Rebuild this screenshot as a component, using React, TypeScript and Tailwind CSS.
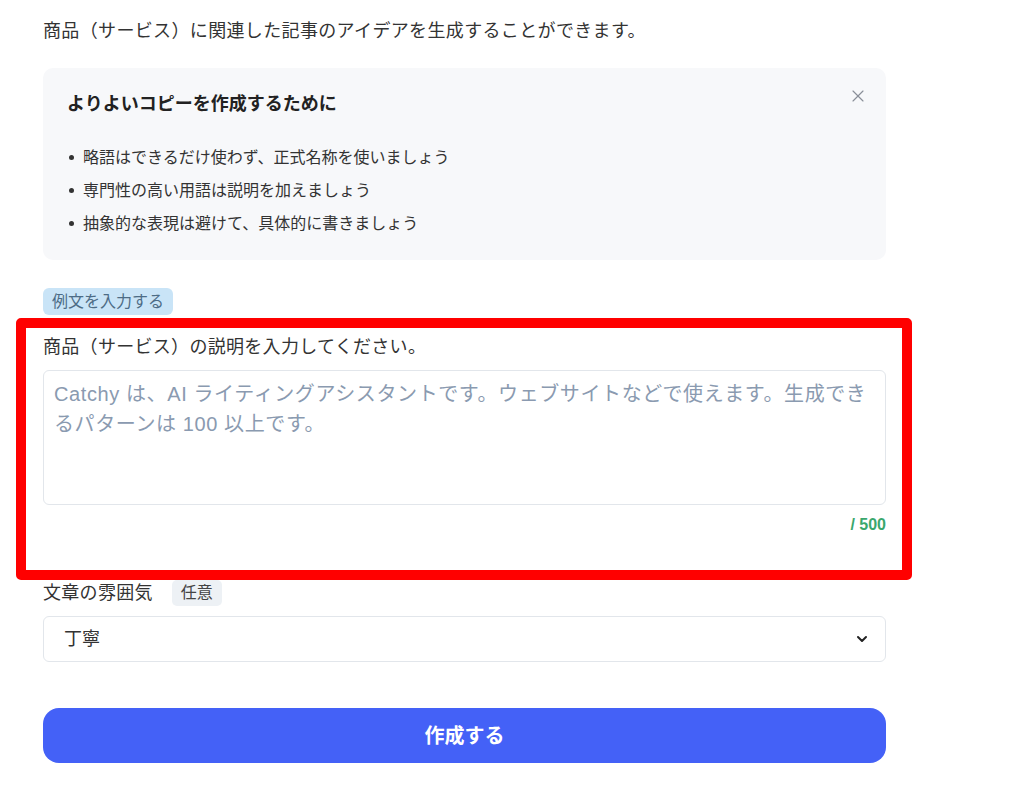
import React, { useState } from 'react';
import { ChevronDown, X } from 'lucide-react';

const TIPS = [
  '略語はできるだけ使わず、正式名称を使いましょう',
  '専門性の高い用語は説明を加えましょう',
  '抽象的な表現は避けて、具体的に書きましょう',
];

const FONT = "font-['Liberation_Sans','Noto_Sans_CJK_JP',sans-serif]";

const App: React.FC = () => {
  const [text, setText] = useState('');
  const [showTips, setShowTips] = useState(true);

  return (
    <div className={`min-h-[810px] w-full bg-white text-[#333333] ${FONT}`}>
      <div className="ml-[43px] w-[843px] pt-[18px]">
        <p className="text-[18px] leading-[26px] tracking-[0.35px]">
          商品（サービス）に関連した記事のアイデアを生成することができます。
        </p>

        {showTips && (
          <div className="relative mt-[24px] h-[192px] rounded-[10px] bg-[#f7f8fa] px-[24px] pt-[23px]">
            <h3 className="text-[18px] font-bold leading-[26px] text-[#222]">
              よりよいコピーを作成するために
            </h3>
            <button
              onClick={() => setShowTips(false)}
              className="absolute right-[18px] top-[18px] text-[#8a8f98]"
            >
              <X className="h-[20px] w-[20px]" strokeWidth={1.4} />
            </button>
            <ul className="mt-[24px]">
              {TIPS.map((t) => (
                <li key={t} className="flex h-[33px] items-center text-[16px]">
                  <span className="ml-[2px] mr-[9px] h-[5px] w-[5px] rounded-full bg-[#333]" />
                  {t}
                </li>
              ))}
            </ul>
          </div>
        )}

        <button className="mt-[28px] flex h-[27px] items-center rounded-[6px] bg-[#c9e4f7] px-[9px] text-[16px] text-[#4d6c86]">
          例文を入力する
        </button>

        <div className="relative mt-[19px]">
          <label className="block text-[18px] leading-[26px] tracking-[0.3px]">
            商品（サービス）の説明を入力してください。
          </label>
          <textarea
            value={text}
            onChange={(e) => setText(e.target.value)}
            placeholder="Catchy は、AI ライティングアシスタントです。ウェブサイトなどで使えます。生成できるパターンは 100 以上です。"
            className="mt-[10px] block h-[135px] w-full resize-none rounded-[6px] border border-[#e2e6eb] px-[10px] pt-[8px] text-[20px] leading-[30px] tracking-[0.6px] outline-none placeholder:text-[#8a9ab0]"
          />
          <div className="mt-[10px] text-right text-[16px] font-bold leading-[20px] text-[#3aa76d]">
            {text.length > 0 ? text.length : ''} / 500
          </div>
          <div className="pointer-events-none absolute -left-[27px] -right-[26px] -top-[16px] -bottom-[45px] rounded-[5px] border-[10px] border-[#ff0000]" />
        </div>

        <div className="mt-[45px] flex h-[26px] items-center">
          <span className="text-[18px] tracking-[0.3px]">文章の雰囲気</span>
          <span className="ml-[19px] flex h-[26px] items-center rounded-[5px] bg-[#edf1f5] px-[9px] text-[16px] text-[#444]">
            任意
          </span>
        </div>

        <div className="relative mt-[10px]">
          <select className="block h-[46px] w-full appearance-none rounded-[6px] border border-[#e2e6eb] bg-white pl-[20px] text-[18px] text-[#333] outline-none">
            <option>丁寧</option>
            <option>カジュアル</option>
          </select>
          <ChevronDown
            className="pointer-events-none absolute right-[16px] top-[15px] h-[16px] w-[16px] text-[#222]"
            strokeWidth={3}
          />
        </div>

        <button className="mt-[46px] flex h-[55px] w-full items-center justify-center rounded-[16px] bg-[#4461f7] text-[20px] font-bold text-white">
          作成する
        </button>
      </div>
    </div>
  );
};

export default App;
